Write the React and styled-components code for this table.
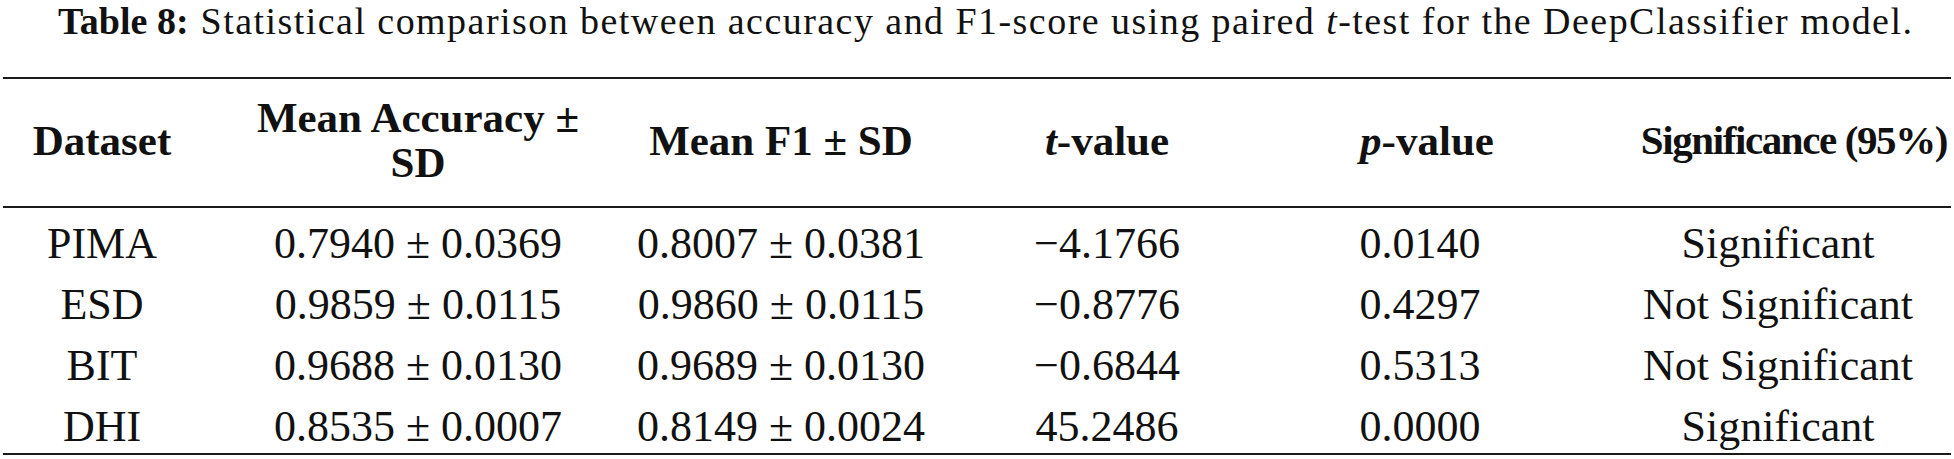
import React from 'react'
import styled, { createGlobalStyle } from 'styled-components'

const GlobalStyle = createGlobalStyle`
  html, body {
    margin: 0;
    padding: 0;
    background: #fff;
  }
  body {
    font-family: "Liberation Serif", "Times New Roman", serif;
    color: #111;
  }
`

const rows = [
  { name: 'PIMA', acc: '0.7940 ± 0.0369', f1: '0.8007 ± 0.0381', t: '−4.1766', p: '0.0140', sig: 'Significant' },
  { name: 'ESD', acc: '0.9859 ± 0.0115', f1: '0.9860 ± 0.0115', t: '−0.8776', p: '0.4297', sig: 'Not Significant' },
  { name: 'BIT', acc: '0.9688 ± 0.0130', f1: '0.9689 ± 0.0130', t: '−0.6844', p: '0.5313', sig: 'Not Significant' },
  { name: 'DHI', acc: '0.8535 ± 0.0007', f1: '0.8149 ± 0.0024', t: '45.2486', p: '0.0000', sig: 'Significant' },
]

const App = () => {
  return <Page>
    <GlobalStyle />
    <Caption>
      <Label>Table 8:</Label>
      Statistical comparison between accuracy and F1-score using paired <i>t</i>-test for the DeepClassifier model.
    </Caption>
    <Table>
      <colgroup>
        <col style={{ width: 198 }} />
        <col style={{ width: 434 }} />
        <col style={{ width: 292 }} />
        <col style={{ width: 360 }} />
        <col style={{ width: 266 }} />
        <col />
      </colgroup>
      <thead>
        <tr>
          <Th>Dataset</Th>
          <Th>Mean Accuracy ±<br />SD</Th>
          <Th>Mean F1 ± SD</Th>
          <Th><i>t</i>-value</Th>
          <Th shift={14}><i>p</i>-value</Th>
          <Th last>Significance (95%)</Th>
        </tr>
      </thead>
      <tbody>
        {rows.map(r => <Row key={r.name}>
          <Td>{r.name}</Td>
          <Td>{r.acc}</Td>
          <Td>{r.f1}</Td>
          <Td>{r.t}</Td>
          <Td>{r.p}</Td>
          <Td last>{r.sig}</Td>
        </Row>)}
      </tbody>
    </Table>
  </Page>
}

export default App

const Page = styled.div`
  width: 1954px;
  height: 459px;
  overflow: hidden;
  padding: 0 3px;
  box-sizing: border-box;
`

const Caption = styled.div`
  font-size: 38px;
  line-height: 42px;
  letter-spacing: 1.45px;
  padding-left: 55px;
  white-space: nowrap;
  margin-bottom: 35px;
  i {
    font-style: italic;
  }
`

const Label = styled.b`
  font-weight: 700;
  letter-spacing: 0;
  margin-right: 12px;
`

const Table = styled.table`
  width: 100%;
  table-layout: fixed;
  border-collapse: collapse;
  border-top: 2px solid #1a1a1a;
  border-bottom: 2px solid #1a1a1a;
  thead tr {
    border-bottom: 2px solid #1a1a1a;
  }
`

const Th = styled.th`
  font-size: 43px;
  font-weight: 700;
  line-height: 45px;
  padding: 16px 0 21px;
  padding-left: ${p => p.shift || 0}px;
  text-align: center;
  vertical-align: middle;
  white-space: nowrap;
  ${p => p.last && `
    font-size: 41px;
    text-align: right;
    padding-right: 4px;
    letter-spacing: -1.4px;
  `}
  i {
    font-style: italic;
  }
`

const Row = styled.tr`
  &:first-child td {
    padding-top: 10px;
  }
  &:last-child td {
    padding-bottom: 0;
  }
`

const Td = styled.td`
  font-size: 44px;
  line-height: 52px;
  padding: 4.5px 0;
  text-align: center;
  white-space: nowrap;
  ${p => p.last && `
    padding-left: 52px;
  `}
`
